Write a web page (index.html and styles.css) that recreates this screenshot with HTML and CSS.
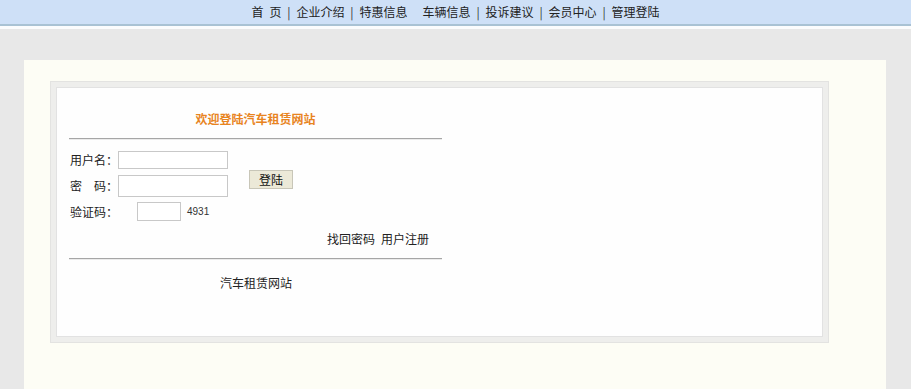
FILE: index.html
```html
<!DOCTYPE html>
<html lang="zh-CN">
<head>
<meta charset="utf-8">
<title>汽车租赁网站 - 登陆</title>
<link rel="stylesheet" href="styles.css">
</head>
<body>
<div class="topbar">
  <nav class="nav">
    <span class="w2">首<span class="sp"></span>页</span>
    <span class="sep">|</span>
    <span>企业介绍</span>
    <span class="sep">|</span>
    <span>特惠信息</span>
    <span class="sep"></span>
    <span>车辆信息</span>
    <span class="sep">|</span>
    <span>投诉建议</span>
    <span class="sep">|</span>
    <span>会员中心</span>
    <span class="sep">|</span>
    <span>管理登陆</span>
  </nav>
</div>
<div class="gap"></div>
<main class="page">
  <div class="panel">
    <div class="frame">
      <div class="box">
        <div class="content">
          <h1 class="title">欢迎登陆汽车租赁网站</h1>
          <div class="rule"></div>
          <form class="form">
            <label class="lbl r1">用户名：</label>
            <div class="field r1"><input class="inp in1" type="text"></div>
            <label class="lbl r2">密<span class="sp2"></span>码：</label>
            <div class="field r2"><input class="inp in2" type="password"></div>
            <label class="lbl r3">验证码：</label>
            <div class="field r3"><input class="inp cap" type="text"><span class="code">4931</span></div>
            <button class="btn" type="button">登陆</button>
          </form>
          <div class="links"><span>找回密码</span><span class="sp"></span><span>用户注册</span></div>
          <div class="rule rule2"></div>
          <div class="foot">汽车租赁网站</div>
        </div>
      </div>
    </div>
  </div>
</main>
</body>
</html>
```

FILE: styles.css
```css
html, body {
  margin: 0;
  padding: 0;
  height: 100%;
  overflow: hidden;
}
body {
  background: #e8e8e8;
  font-family: "Noto Sans CJK SC", "Liberation Sans", sans-serif;
  font-size: 12px;
  color: #222;
}
.topbar {
  height: 24px;
  background: #cee0f7;
  border-bottom: 2px solid #a9c2d4;
}
.nav {
  display: flex;
  justify-content: center;
  align-items: center;
  height: 24px;
  line-height: 24px;
  color: #222;
}
.nav .sep {
  display: inline-block;
  width: 15px;
  text-align: center;
  color: #333;
}
.sp { display: inline-block; width: 6px; }
.sp2 { display: inline-block; width: 13px; }
.gap {
  height: 3px;
  background: #fbfcfd;
}
.page {
  padding-top: 31px;
}
.panel {
  width: 862px;
  margin-left: 24px;
  height: 329px;
  background: #fdfdf5;
  padding-top: 21px;
  box-sizing: border-box;
}
.frame {
  margin-left: 26px;
  width: 779px;
  height: 262px;
  box-sizing: border-box;
  border: 1px solid #e3e3e1;
  background: #eeeeec;
  padding: 5px;
}
.box {
  width: 767px;
  height: 250px;
  box-sizing: border-box;
  border: 1px solid #e2e2e2;
  background: #fefefe;
}
.content {
  width: 373px;
  margin-left: 12px;
  padding-top: 23px;
}
.title {
  margin: 0;
  font-size: 12px;
  line-height: 16px;
  font-weight: bold;
  color: #e8841f;
  text-align: center;
}
.rule {
  margin-top: 11px;
  height: 1px;
  background: #a6a6a6;
  border-bottom: 1px solid #ebebeb;
}
.form {
  margin: 11px 0 0 0;
  display: grid;
  grid-template-columns: 49px 131px auto;
  grid-template-rows: 18px 21px 19px;
  row-gap: 6px;
}
.lbl {
  grid-column: 1;
  display: flex;
  align-items: center;
  padding-left: 1px;
  line-height: 16px;
}
.field {
  grid-column: 2;
  display: flex;
  align-items: center;
}
.r1 { grid-row: 1; }
.r2 { grid-row: 2; }
.r3 { grid-row: 3; }
.inp {
  box-sizing: border-box;
  border: 1px solid #c8c8c8;
  background: #fff;
  margin: 0;
  padding: 0 2px;
  font: inherit;
}
.in1 { width: 110px; height: 18px; }
.in2 { width: 110px; height: 22px; margin-top: 1px; }
.cap { width: 44px; height: 19px; margin-left: 19px; }
.code {
  margin-left: 6px;
  font-family: "Liberation Sans", sans-serif;
  font-size: 10px;
  color: #333;
}
.btn {
  grid-column: 3;
  grid-row: 1 / 3;
  align-self: start;
  justify-self: start;
  margin: 19px 0 0 0;
  width: 44px;
  height: 19px;
  padding: 0;
  box-sizing: border-box;
  border: 1px solid #c8c6b8;
  background: #ece9d8;
  font: inherit;
  color: #111;
  line-height: 16px;
}
.links {
  margin-top: 10px;
  line-height: 16px;
  text-align: right;
  padding-right: 13px;
}
.rule2 { margin-top: 11px; }
.foot {
  margin-top: 15px;
  line-height: 16px;
  text-align: center;
  padding-left: 1px;
}
```
